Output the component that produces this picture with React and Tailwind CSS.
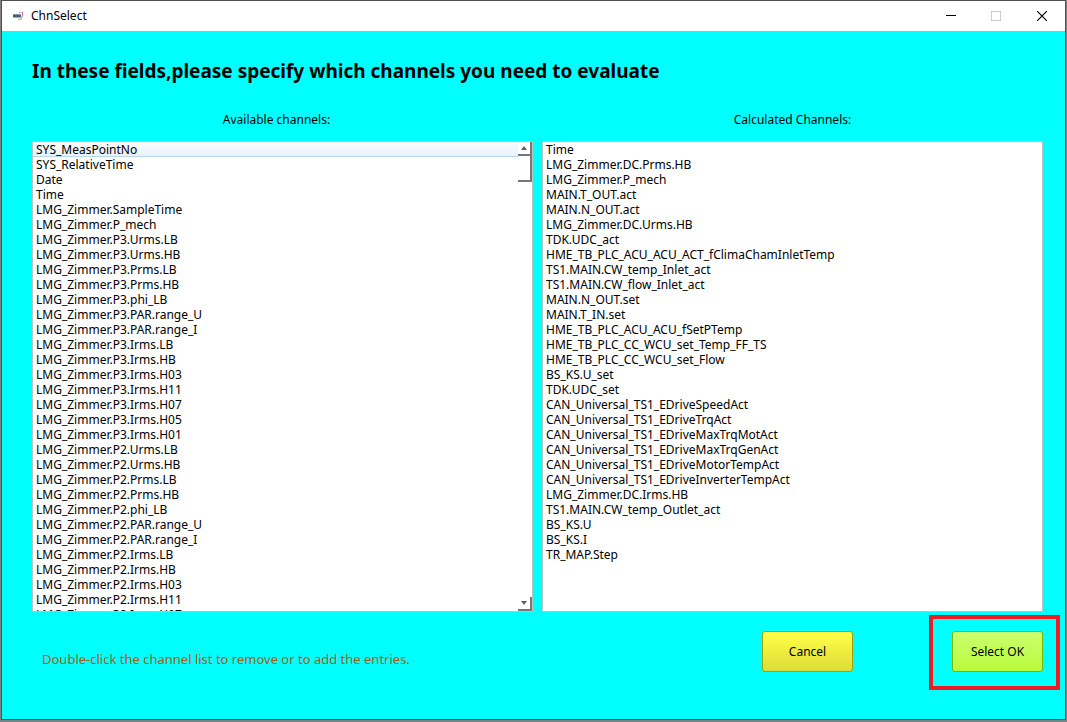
const availableChannels = [
  "SYS_MeasPointNo",
  "SYS_RelativeTime",
  "Date",
  "Time",
  "LMG_Zimmer.SampleTime",
  "LMG_Zimmer.P_mech",
  "LMG_Zimmer.P3.Urms.LB",
  "LMG_Zimmer.P3.Urms.HB",
  "LMG_Zimmer.P3.Prms.LB",
  "LMG_Zimmer.P3.Prms.HB",
  "LMG_Zimmer.P3.phi_LB",
  "LMG_Zimmer.P3.PAR.range_U",
  "LMG_Zimmer.P3.PAR.range_I",
  "LMG_Zimmer.P3.Irms.LB",
  "LMG_Zimmer.P3.Irms.HB",
  "LMG_Zimmer.P3.Irms.H03",
  "LMG_Zimmer.P3.Irms.H11",
  "LMG_Zimmer.P3.Irms.H07",
  "LMG_Zimmer.P3.Irms.H05",
  "LMG_Zimmer.P3.Irms.H01",
  "LMG_Zimmer.P2.Urms.LB",
  "LMG_Zimmer.P2.Urms.HB",
  "LMG_Zimmer.P2.Prms.LB",
  "LMG_Zimmer.P2.Prms.HB",
  "LMG_Zimmer.P2.phi_LB",
  "LMG_Zimmer.P2.PAR.range_U",
  "LMG_Zimmer.P2.PAR.range_I",
  "LMG_Zimmer.P2.Irms.LB",
  "LMG_Zimmer.P2.Irms.HB",
  "LMG_Zimmer.P2.Irms.H03",
  "LMG_Zimmer.P2.Irms.H11",
  "LMG_Zimmer.P2.Irms.H07",
];

const calculatedChannels = [
  "Time",
  "LMG_Zimmer.DC.Prms.HB",
  "LMG_Zimmer.P_mech",
  "MAIN.T_OUT.act",
  "MAIN.N_OUT.act",
  "LMG_Zimmer.DC.Urms.HB",
  "TDK.UDC_act",
  "HME_TB_PLC_ACU_ACU_ACT_fClimaChamInletTemp",
  "TS1.MAIN.CW_temp_Inlet_act",
  "TS1.MAIN.CW_flow_Inlet_act",
  "MAIN.N_OUT.set",
  "MAIN.T_IN.set",
  "HME_TB_PLC_ACU_ACU_fSetPTemp",
  "HME_TB_PLC_CC_WCU_set_Temp_FF_TS",
  "HME_TB_PLC_CC_WCU_set_Flow",
  "BS_KS.U_set",
  "TDK.UDC_set",
  "CAN_Universal_TS1_EDriveSpeedAct",
  "CAN_Universal_TS1_EDriveTrqAct",
  "CAN_Universal_TS1_EDriveMaxTrqMotAct",
  "CAN_Universal_TS1_EDriveMaxTrqGenAct",
  "CAN_Universal_TS1_EDriveMotorTempAct",
  "CAN_Universal_TS1_EDriveInverterTempAct",
  "LMG_Zimmer.DC.Irms.HB",
  "TS1.MAIN.CW_temp_Outlet_act",
  "BS_KS.U",
  "BS_KS.I",
  "TR_MAP.Step",
];

function AppIcon() {
  return (
    <svg width="11" height="10" viewBox="0 0 11 10" aria-hidden="true">
      <path d="M1 3h8v3.500H1z" fill="#4a648c" />
      <path d="M1 3.500h8" stroke="#7f93b2" />
      <path d="M2.500 4v2M5.500 4v2" stroke="#2f4a78" />
      <path d="M7 1.500h2.500" stroke="#c9a0a8" />
      <path d="M10.500 1v3" stroke="#c46a78" />
      <path d="M10.500 4q0 3-2 3.500" fill="none" stroke="#8494ac" />
      <path d="M6 8.500h3l1-1" fill="none" stroke="#c2d27a" strokeWidth="1.400" />
    </svg>
  );
}

function TitleBar() {
  return (
    <header className="flex h-[30px] shrink-0 items-center bg-white pl-[10px]">
      <AppIcon />
      <span className="pl-2 text-[12px] leading-4">ChnSelect</span>
      <div className="ml-auto flex h-full">
        <button type="button" aria-label="Minimize" className="flex w-[45px] items-center justify-center">
          <svg width="10" height="10" viewBox="0 0 10 10" shapeRendering="crispEdges">
            <path d="M0 4.500h10" stroke="#000" />
          </svg>
        </button>
        <button type="button" aria-label="Maximize" disabled className="flex w-[45px] items-center justify-center">
          <svg width="10" height="10" viewBox="0 0 10 10" shapeRendering="crispEdges">
            <path d="M.5.5h9v9h-9z" fill="none" stroke="#ccc" />
          </svg>
        </button>
        <button type="button" aria-label="Close" className="flex w-[47px] items-center justify-center">
          <svg width="10" height="10" viewBox="0 0 10 10">
            <path d="M0 0l10 10M10 0L0 10" stroke="#000" strokeWidth="1.200" />
          </svg>
        </button>
      </div>
    </header>
  );
}

function ScrollBar() {
  return (
    <div className="flex w-[14px] shrink-0 flex-col justify-between">
      <div>
        <button
          type="button"
          aria-label="Scroll up"
          className="flex h-[14px] w-full items-center justify-center border-r-2 border-b-2 border-[#777]"
        >
          <svg width="6" height="4" viewBox="0 0 6 4">
            <path d="M0 4l3-4 3 4z" fill="#606060" />
          </svg>
        </button>
        <div className="h-[26px] border-r-2 border-b-2 border-[#777]" />
      </div>
      <button
        type="button"
        aria-label="Scroll down"
        className="flex h-[14px] w-full items-center justify-center border-r-2 border-b-2 border-[#777]"
      >
        <svg width="6" height="4" viewBox="0 0 6 4">
          <path d="M0 0l3 4 3-4z" fill="#606060" />
        </svg>
      </button>
    </div>
  );
}

function ChannelList({ id, label, channels, scrollable, focused }) {
  return (
    <section className="flex min-h-0 min-w-0 flex-col">
      <label
        htmlFor={id}
        className={scrollable ? "pr-3 text-center leading-4" : "text-center leading-4"}
      >
        {label}
      </label>
      <div className="mt-[13px] flex min-h-0 flex-1 border border-[#c0c0c0] bg-white">
        <select
          id={id}
          multiple
          className="h-full min-w-0 flex-1 appearance-none overflow-y-auto border-0 bg-white p-0 text-[12px] outline-none [scrollbar-width:none]"
        >
          {channels.map((name, i) => (
            <option
              key={name}
              className={
                focused === i
                  ? "flex h-[15px] min-h-0 items-center bg-linear-to-b from-[#fafcff] to-[#e6f2fb] p-0 pl-[3px] shadow-[inset_0_-1px_0_#b8d8ee]"
                  : "flex h-[15px] min-h-0 items-center p-0 pl-[3px]"
              }
            >
              {name}
            </option>
          ))}
        </select>
        {scrollable && <ScrollBar />}
      </div>
    </section>
  );
}

export default function App() {
  return (
    <div className="flex h-screen flex-col bg-[#808080] pr-px pb-[2px] pl-px font-['Noto_Sans','Noto_Sans_CJK_SC',sans-serif] text-[12px] text-black">
      <div className="flex min-h-0 flex-1 flex-col border border-[#505050] bg-[#00ffff]">
        <TitleBar />
        <main className="flex min-h-0 flex-1 flex-col pr-[22px] pb-[47px] pl-[30px]">
          <h1 className="mt-[26px] shrink-0 text-[19px] leading-7 font-bold whitespace-nowrap">
            In these fields,please specify which channels you need to evaluate
          </h1>
          <div className="mt-[27px] grid min-h-0 flex-1 grid-cols-2 grid-rows-1 gap-[9px]">
            <ChannelList
              id="available"
              label="Available channels:"
              channels={availableChannels}
              scrollable
              focused={0}
            />
            <ChannelList id="calculated" label="Calculated Channels:" channels={calculatedChannels} />
          </div>
          <footer className="mt-[19px] flex shrink-0 items-center">
            <p className="pt-[14px] pl-[10px] text-[13px] leading-4 text-[#a65a14]">
              Double-click the channel list to remove or to add the entries.
            </p>
            <div className="ml-auto flex gap-[99px]">
              <button
                type="button"
                className="h-[41px] w-[91px] rounded-[3px] border border-[#a0a000] bg-linear-to-b from-[#ffff48] to-[#dcdc38]"
              >
                Cancel
              </button>
              <div className="relative">
                <button
                  type="button"
                  className="h-[41px] w-[91px] rounded-[3px] border border-[#7cb800] bg-linear-to-b from-[#ccff6c] to-[#b8fa38]"
                >
                  Select OK
                </button>
                <div className="pointer-events-none absolute -top-4 -right-[17px] -bottom-[18px] -left-[23px] border-4 border-[#ed1c24]" />
              </div>
            </div>
          </footer>
        </main>
      </div>
    </div>
  );
}
